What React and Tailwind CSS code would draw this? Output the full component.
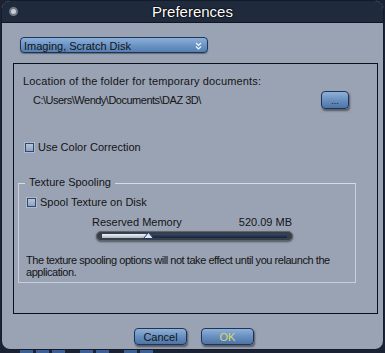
import React from "react";

const font = { fontFamily: '"Liberation Sans", Arial, sans-serif' };

function Check({ label }) {
  return (
    <div className="flex items-center gap-[4px]">
      <span className="w-[9px] h-[9px] border border-[#2b4a78] bg-gradient-to-b from-[#b9c6d9] to-[#8fa3bf] shadow-[0_0_0_1px_rgba(255,255,255,0.25)]" />
      <span>{label}</span>
    </div>
  );
}

function BlueButton({ children, className = "" }) {
  return (
    <div
      className={
        "flex items-center justify-center rounded-[4px] border border-[#1d3556] bg-gradient-to-b from-[#8fb0d8] via-[#6a90c0] to-[#4d74a6] shadow-[1px_2px_2px_rgba(0,0,0,0.45)] " +
        className
      }
    >
      {children}
    </div>
  );
}

export default function App() {
  return (
    <div className="w-[385px] h-[353px] bg-[#1b2233] overflow-hidden text-[11px] text-[#141414]" style={font}>
      {/* window */}
      <div className="ml-[1px] w-[383px] h-[350px] rounded-[9px] border border-[#141b28] bg-[#9aa3b4] overflow-hidden flex flex-col">
        {/* title bar */}
        <div className="relative h-[22px] bg-[#1f2a3d] border-b border-[#0e1420] flex items-center justify-center">
          <span className="absolute left-[7px] top-[6px] w-[9px] h-[9px] rounded-full bg-[#c9ced6] border-2 border-[#6f7886]" />
          <span
            className="text-[15px] text-white leading-none"
            style={{ textShadow: "0 0 1px #000, 0 0 1px #000, 0 0 2px #000" }}
          >
            Preferences
          </span>
        </div>

        {/* dropdown */}
        <div className="mt-[14px] ml-[18px] w-[188px] h-[16px] rounded-[4px] border border-[#1e3558] bg-gradient-to-b from-[#8db0da] via-[#6d95c6] to-[#5580b3] flex items-center justify-between pl-[3px] pr-[5px] shadow-[0_1px_1px_rgba(0,0,0,0.35)]">
          <span className="leading-none mt-[2px]">Imaging, Scratch Disk</span>
          <svg width="7" height="8" viewBox="0 0 7 8" className="mt-[1px]">
            <path d="M1 1 L3.5 3.5 L6 1 M1 4.5 L3.5 7 L6 4.5" fill="none" stroke="#f0f4fa" strokeWidth="1.2" />
          </svg>
        </div>

        {/* inner panel */}
        <div className="mt-[10px] ml-[11px] w-[365px] h-[251px] border border-[#0b0f16] flex flex-col">
          <div className="mt-[12px] ml-[9px] leading-none tracking-[0.15px]">Location of the folder for temporary documents:</div>
          <div className="mt-[4px] flex items-center">
            <span className="ml-[19px] leading-none tracking-[-0.5px]">C:\Users\Wendy\Documents\DAZ 3D\</span>
            <BlueButton className="ml-auto mr-[28px] w-[28px] h-[18px]">
              <span className="text-[9px] leading-none mt-[3px]">...</span>
            </BlueButton>
          </div>
          <div className="mt-[33px] ml-[11px] leading-none">
            <Check label="Use Color Correction" />
          </div>

          {/* group box */}
          <div className="relative mt-[30px] ml-[4px] w-[338px] h-[100px] border border-[#c9d0dc] border-t-[#d6dbe4]">
            <span className="absolute -top-[7px] left-[6px] px-[4px] bg-[#9aa3b4] leading-none">Texture Spooling</span>
            <div className="mt-[13px] ml-[8px] leading-none">
              <Check label="Spool Texture on Disk" />
            </div>
            <div className="mt-[9px] ml-[73px] w-[200px] flex justify-between leading-none">
              <span>Reserved Memory</span>
              <span>520.09 MB</span>
            </div>
            {/* slider */}
            <div className="relative mt-[3px] ml-[77px] w-[197px] h-[10px] rounded-full bg-[#3a3f47] border border-[#5d6470] shadow-[0_1px_2px_rgba(0,0,0,0.5)] flex items-center px-[5px]">
              <div className="h-[4px] w-[48px] bg-gradient-to-b from-[#eef3f9] to-[#a9b9cf]" />
              <div className="h-[4px] flex-1 bg-gradient-to-b from-[#33486a] to-[#18243a]" />
              <svg className="absolute left-[46px] top-[0px]" width="11" height="7" viewBox="0 0 11 7">
                <polygon points="5.5,0.5 10.5,6.5 0.5,6.5" fill="#dfe8f4" stroke="#1d3a66" strokeWidth="1" />
              </svg>
            </div>
            <div className="mt-[13px] ml-[7px] leading-[12px] w-[326px] tracking-[-0.45px]">
              The texture spooling options will not take effect until you relaunch the application.
            </div>
          </div>
        </div>

        {/* buttons */}
        <div className="mt-[14px] flex gap-[14px] pl-[132px]">
          <BlueButton className="w-[53px] h-[17px]">
            <span className="leading-none mt-[2px]">Cancel</span>
          </BlueButton>
          <BlueButton className="w-[53px] h-[17px]">
            <span className="leading-none mt-[2px] text-[#dada6a]">OK</span>
          </BlueButton>
        </div>
      </div>

      {/* desktop behind */}
      <div className="flex gap-[3px] ml-[20px] h-[3px]">
        <span className="w-[13px] bg-[#3c5f95]" />
        <span className="w-[13px] bg-[#3c5f95]" />
        <span className="w-[13px] bg-[#3c5f95]" />
        <span className="w-[13px] bg-[#3c5f95] ml-[12px]" />
        <span className="w-[13px] bg-[#3c5f95]" />
        <span className="w-[13px] bg-[#3c5f95] ml-[12px]" />
        <span className="w-[13px] bg-[#3c5f95]" />
      </div>
    </div>
  );
}
